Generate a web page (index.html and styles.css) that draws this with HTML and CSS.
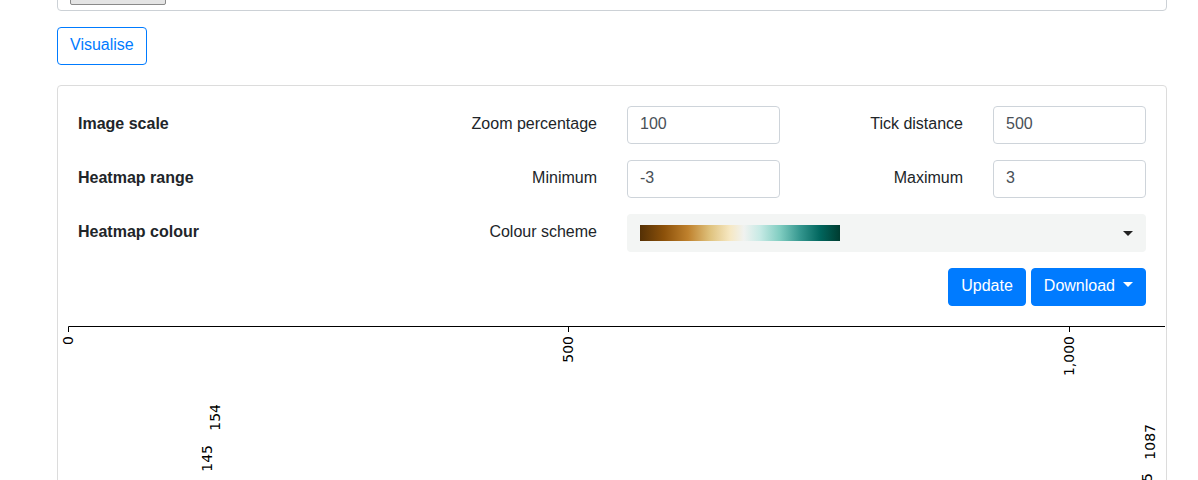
FILE: index.html
```html
<!DOCTYPE html>
<html lang="en">
<head>
<meta charset="utf-8">
<title>Heatmap</title>
<link rel="stylesheet" href="styles.css">
</head>
<body>
<div class="page">
  <div class="card top-card">
    <div class="file-btn"></div>
  </div>

  <button class="btn btn-outline">Visualise</button>

  <div class="card main-card">
    <div class="card-body">
      <div class="form-grid">
        <div class="group-label">Image scale</div>
        <label class="field-label">Zoom percentage</label>
        <input class="input" type="text" value="100">
        <label class="field-label">Tick distance</label>
        <input class="input" type="text" value="500">

        <div class="group-label">Heatmap range</div>
        <label class="field-label">Minimum</label>
        <input class="input" type="text" value="-3">
        <label class="field-label">Maximum</label>
        <input class="input" type="text" value="3">

        <div class="group-label">Heatmap colour</div>
        <label class="field-label">Colour scheme</label>
        <div class="scheme-select">
          <span class="scheme-bar"></span>
          <span class="select-caret"></span>
        </div>
      </div>
      <div class="actions">
        <button class="btn btn-primary">Update</button>
        <button class="btn btn-primary dropdown-toggle">Download</button>
      </div>
    </div>
    <svg class="plot" width="1107" height="160" viewBox="0 0 1107 160">
      <g class="axis" fill="none" stroke="#000" stroke-width="1">
        <path d="M10.5,6V0.5H1107"/>
        <line x1="510.5" y1="0" x2="510.5" y2="6"/>
        <line x1="1011.5" y1="0" x2="1011.5" y2="6"/>
      </g>
      <g class="tick-labels" font-family="'DejaVu Sans', sans-serif" font-size="14" fill="#000" text-anchor="end">
        <text transform="translate(10.5,10) rotate(-90)" dy="0.35em">0</text>
        <text transform="translate(510.5,10) rotate(-90)" dy="0.35em">500</text>
        <text transform="translate(1011.5,10) rotate(-90)" dy="0.35em">1,000</text>
      </g>
      <g class="cell-labels" font-family="'DejaVu Sans', sans-serif" font-size="14" fill="#000" text-anchor="end">
        <text transform="translate(157,78) rotate(-90)" dy="0.35em">154</text>
        <text transform="translate(149,119) rotate(-90)" dy="0.35em">145</text>
        <text transform="translate(1092,98) rotate(-90)" dy="0.35em">1087</text>
        <text transform="translate(1089,147) rotate(-90)" dy="0.35em">1085</text>
      </g>
    </svg>
  </div>
</div>
</body>
</html>
```

FILE: styles.css
```css
* {
  box-sizing: border-box;
}

html, body {
  margin: 0;
  padding: 0;
  background: #fff;
  overflow: hidden;
}

body {
  font-family: "Liberation Sans", Arial, sans-serif;
  font-size: 16px;
  line-height: 1.5;
  color: #212529;
}

.page {
  width: 1110px;
  margin-left: 57px;
  display: flex;
  flex-direction: column;
  align-items: flex-start;
}

.card {
  width: 100%;
  background: #fff;
  border: 1px solid #dcdcdc;
  border-radius: 4px;
}

.top-card {
  margin-top: -40px;
  height: 51px;
  border-color: #ccd1d6;
  padding: 0 12px;
}

.file-btn {
  margin-top: 4px;
  width: 96px;
  height: 40px;
  background: #e4e4e4;
  border: 1px solid #8a8a8a;
  border-radius: 2px;
}

.btn {
  font-family: inherit;
  font-size: 16px;
  line-height: 24px;
  padding: 5px 12px 7px;
  border-radius: 4px;
  border: 1px solid transparent;
  cursor: pointer;
  height: 38px;
}

.btn-outline {
  margin-top: 16px;
  color: #007bff;
  background: #fff;
  border-color: #007bff;
}

.btn-primary {
  color: #fff;
  background: #007bff;
  border-color: #007bff;
}

.dropdown-toggle::after {
  content: "";
  display: inline-block;
  margin-left: 8px;
  vertical-align: 0.22em;
  border-top: 5px solid #fff;
  border-left: 5px solid transparent;
  border-right: 5px solid transparent;
}

.main-card {
  margin-top: 20px;
  height: 420px;
  overflow: hidden;
}

.card-body {
  padding: 20px;
}

.form-grid {
  display: grid;
  grid-template-columns: 1fr 1fr 153px 153px 153px;
  column-gap: 30px;
  row-gap: 16px;
  align-items: center;
}

.group-label {
  font-weight: bold;
  line-height: 22px;
  padding-bottom: 3px;
}

.field-label {
  text-align: right;
  line-height: 22px;
  padding-bottom: 3px;
}

.input {
  height: 38px;
  width: 100%;
  padding: 5px 12px 7px;
  font-family: inherit;
  font-size: 16px;
  color: #495057;
  background: #fff;
  border: 1px solid #ced4da;
  border-radius: 4px;
}

.scheme-select {
  grid-column: 3 / span 3;
  height: 38px;
  background: #f3f5f4;
  border-radius: 4px;
  display: flex;
  align-items: center;
  justify-content: space-between;
  padding: 0 13px;
}

.scheme-bar {
  width: 200px;
  height: 16px;
  background: linear-gradient(to right,
    #543005 0%, #8c510a 12%, #bf812d 24%, #dfc27d 35%, #f6e8c3 45%,
    #f0f2f0 52%, #c7eae5 60%, #80cdc1 70%, #35978f 80%, #01665e 90%, #003c30 100%);
}

.select-caret {
  width: 0;
  height: 0;
  border-top: 5px solid #222;
  border-left: 5px solid transparent;
  border-right: 5px solid transparent;
}

.actions {
  margin-top: 16px;
  display: flex;
  justify-content: flex-end;
  gap: 5px;
}

.plot {
  display: block;
}
```
